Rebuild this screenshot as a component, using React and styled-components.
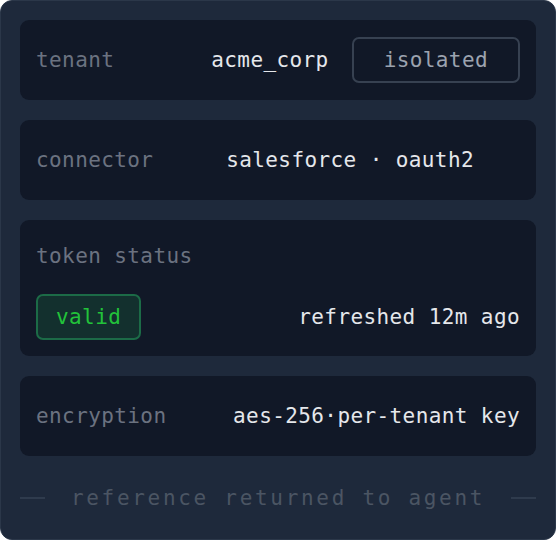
import React from 'react';
import styled, { createGlobalStyle } from 'styled-components';

const Global = createGlobalStyle`
  html, body {
    margin: 0;
    padding: 0;
    background: #ffffff;
  }
  * {
    box-sizing: border-box;
  }
`;

const Panel = styled.div`
  width: 556px;
  height: 540px;
  background: #1e293b;
  border: 1px solid #2b3749;
  border-radius: 12px;
  padding: 19px;
  display: flex;
  flex-direction: column;
  gap: 20px;
  font-family: 'DejaVu Sans Mono', 'Liberation Mono', monospace;
  font-size: 21px;
  letter-spacing: 0.4px;
`;

const Card = styled.div`
  background: #111827;
  border-radius: 9px;
  padding: 0 16px;
  height: 80px;
  display: flex;
  align-items: center;
`;

const StackCard = styled(Card)`
  height: 136px;
  flex-direction: column;
  align-items: stretch;
  padding: 20px 16px 16px;
  gap: 22px;
`;

const Label = styled.span`
  color: #6b7280;
  line-height: 32px;
  flex: 1;
`;

const Value = styled.span`
  color: #e5e7eb;
  line-height: 32px;
  white-space: nowrap;
  margin-right: ${(p) => p.$inset || 0}px;
`;

const Row = styled.div`
  display: flex;
  align-items: center;
  justify-content: space-between;
`;

const Badge = styled.span`
  height: 46px;
  display: inline-flex;
  align-items: center;
  padding: 0 ${(p) => p.$pad}px;
  border-radius: 7px;
  border: 2px solid ${(p) => (p.$ok ? '#1c6b47' : '#374151')};
  background: ${(p) => (p.$ok ? '#13302e' : 'transparent')};
  color: ${(p) => (p.$ok ? '#22c33a' : '#9ca3af')};
  margin-left: 23px;
  &:first-child {
    margin-left: 0;
  }
`;

const Footer = styled.div`
  height: 44px;
  display: flex;
  align-items: center;
  gap: 26px;
  color: #4b5563;
  letter-spacing: 2.7px;
  white-space: nowrap;
`;

const Rule = styled.span`
  flex: 1;
  height: 2px;
  background: #2f3b4d;
`;

export default function App() {
  return (
    <>
      <Global />
      <Panel>
        <Card>
          <Label>tenant</Label>
          <Value>acme_corp</Value>
          <Badge $pad={30}>isolated</Badge>
        </Card>
        <Card>
          <Label>connector</Label>
          <Value $inset={46}>salesforce · oauth2</Value>
        </Card>
        <StackCard>
          <Label>token status</Label>
          <Row>
            <Badge $ok $pad={18}>valid</Badge>
            <Value>refreshed 12m ago</Value>
          </Row>
        </StackCard>
        <Card>
          <Label>encryption</Label>
          <Value>aes-256·per-tenant key</Value>
        </Card>
        <Footer>
          <Rule />
          <span>reference returned to agent</span>
          <Rule />
        </Footer>
      </Panel>
    </>
  );
}
